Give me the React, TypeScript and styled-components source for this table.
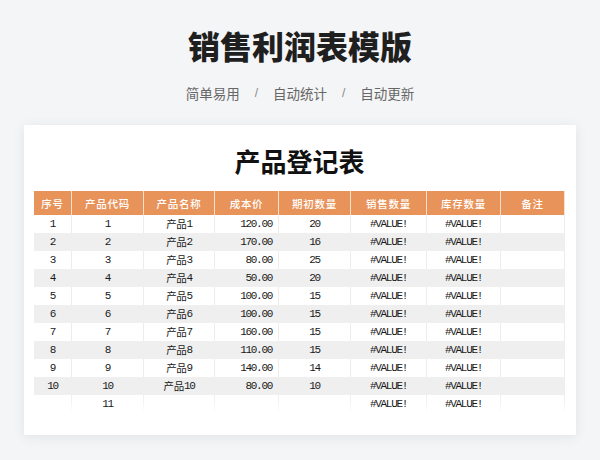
import React from "react";
import styled, { createGlobalStyle } from "styled-components";

const Global = createGlobalStyle`
  html, body { margin: 0; padding: 0; background: #f4f5f7; }
  body { width: 600px; height: 460px; overflow: hidden; font-family: "Noto Sans CJK SC", "Noto Sans", sans-serif; }
`;

const Page = styled.div`
  width: 600px;
  height: 460px;
  box-sizing: border-box;
  padding: 22px 24px 0;
  display: flex;
  flex-direction: column;
  align-items: center;
`;

const Title = styled.h1`
  margin: 0;
  font-family: "Noto Sans CJK SC", sans-serif;
  font-weight: 900;
  font-size: 32px;
  line-height: 46px;
  color: #1f1f1f;
`;

const Subtitle = styled.div`
  margin-top: 16px;
  display: flex;
  align-items: center;
  font-size: 13.5px;
  line-height: 18px;
  color: #666;
`;

const Slash = styled.span`
  margin: 0 15px;
  color: #888;
  font-family: "Liberation Sans", sans-serif;
  font-size: 12px;
`;

const Card = styled.div`
  margin-top: 23px;
  width: 552px;
  box-sizing: border-box;
  background: #fff;
  box-shadow: 0 2px 12px rgba(0, 0, 0, 0.08);
  padding: 17px 11px 22px 10px;
  display: flex;
  flex-direction: column;
  align-items: stretch;
`;

const CardTitle = styled.h2`
  margin: 0 0 11px;
  text-align: center;
  font-family: "Noto Sans CJK SC", sans-serif;
  font-weight: 700;
  font-size: 26px;
  line-height: 38px;
  color: #111;
`;

const Grid = styled.div`
  display: grid;
  grid-template-columns: 38px 72px 71px 64px 72px 76px 74px 64px;
`;

const HeadCell = styled.div`
  height: 24px;
  background: #e8935a;
  color: #fff;
  font-size: 10.5px;
  font-weight: 500;
  letter-spacing: 0.7px;
  display: flex;
  align-items: center;
  justify-content: center;
  border-right: 1px solid rgba(255, 255, 255, 0.7);
  &:last-child { border-right: none; }
`;

type CellProps = { $shade: boolean; $align?: "left" | "center" | "right"; $fade?: boolean };

const Cell = styled.div<CellProps>`
  height: 18px;
  box-sizing: border-box;
  background: ${(p) => (p.$shade ? "#efefef" : "#fff")};
  border-right: 1px solid ${(p) => (p.$shade ? "#efefef" : "#ececec")};
  ${(p) => (p.$fade ? "border-image: linear-gradient(#ececec, rgba(236,236,236,0)) 1;" : "")}
  display: flex;
  align-items: center;
  justify-content: ${(p) =>
    p.$align === "right" ? "flex-end" : p.$align === "left" ? "flex-start" : "center"};
  padding: 0 ${(p) => (p.$align === "right" ? "6px" : "0")};
  font-family: "Liberation Mono", monospace;
  font-size: 11px;
  line-height: 18px;
  letter-spacing: -1.3px;
  color: #1a1a1a;
  white-space: nowrap;
`;

const Han = styled.span`
  font-family: "Noto Sans CJK SC", sans-serif;
  font-size: 10.5px;
  letter-spacing: -0.3px;
  line-height: 18px;
`;

const heads = ["序号", "产品代码", "产品名称", "成本价", "期初数量", "销售数量", "库存数量", "备注"];

const rows = [
  ["1", "1", "1", "120.00", "20"],
  ["2", "2", "2", "170.00", "16"],
  ["3", "3", "3", "80.00", "25"],
  ["4", "4", "4", "50.00", "20"],
  ["5", "5", "5", "100.00", "15"],
  ["6", "6", "6", "100.00", "15"],
  ["7", "7", "7", "160.00", "15"],
  ["8", "8", "8", "110.00", "15"],
  ["9", "9", "9", "140.00", "14"],
  ["10", "10", "10", "80.00", "10"],
  ["", "11", "", "", ""],
];

const aligns: ("left" | "center" | "right")[] = [
  "center", "center", "center", "right", "center", "center", "center", "center",
];

export default function App() {
  return (
    <>
      <Global />
      <Page>
        <Title>销售利润表模版</Title>
        <Subtitle>
          <span>简单易用</span>
          <Slash>/</Slash>
          <span>自动统计</span>
          <Slash>/</Slash>
          <span>自动更新</span>
        </Subtitle>
        <Card>
          <CardTitle>产品登记表</CardTitle>
          <Grid>
            {heads.map((h) => (
              <HeadCell key={h}>{h}</HeadCell>
            ))}
            {rows.map((r, i) => {
              const cells = [...r, "#VALUE!", "#VALUE!", ""];
              const shade = i % 2 === 1;
              const fade = i === rows.length - 1;
              return cells.map((c, j) => (
                <Cell key={`${i}-${j}`} $shade={shade} $align={aligns[j]} $fade={fade}>
                  {j === 2 && c ? (
                    <>
                      <Han>产品</Han>
                      {c}
                    </>
                  ) : (
                    c
                  )}
                </Cell>
              ));
            })}
          </Grid>
        </Card>
      </Page>
    </>
  );
}
